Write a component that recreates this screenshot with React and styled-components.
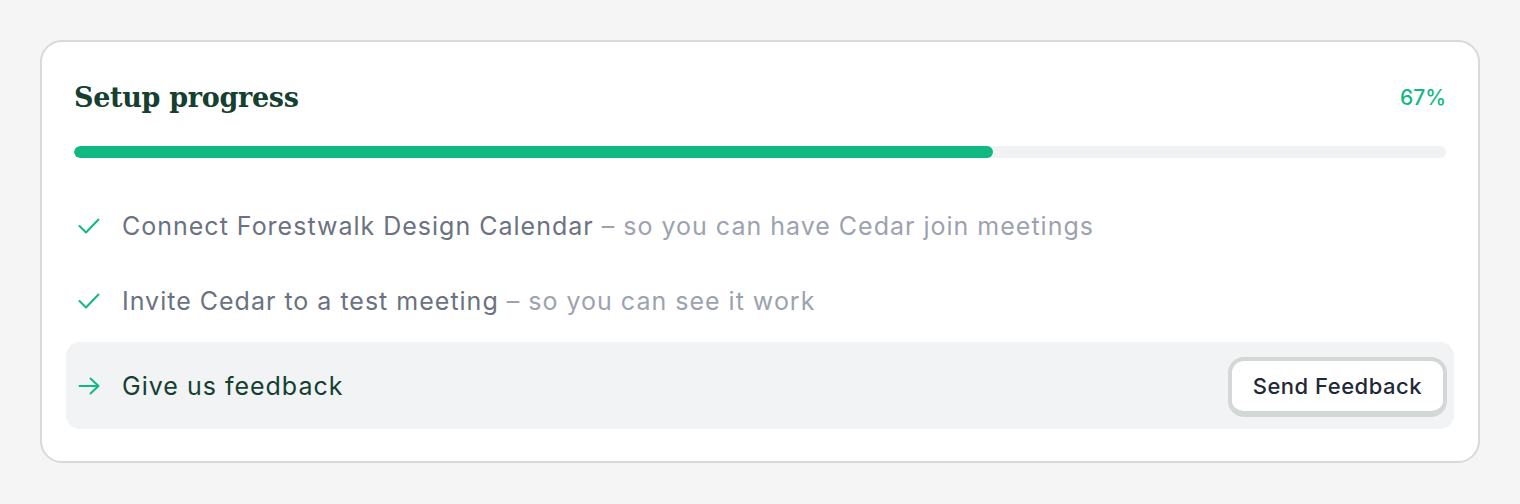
import React from "react";
import styled, { createGlobalStyle } from "styled-components";

const GlobalStyle = createGlobalStyle`
  html, body {
    margin: 0;
    padding: 0;
    background: #f5f5f5;
  }
  body {
    font-family: Inter, "Noto Sans", sans-serif;
    -webkit-font-smoothing: antialiased;
  }
`;

const Page = styled.div`
  padding: 40px;
`;

const Card = styled.section`
  background: #fff;
  border: 2px solid #d6dad8;
  border-radius: 22px;
  padding: 33px 32px 32px;
`;

const Header = styled.div`
  display: flex;
  align-items: center;
  justify-content: space-between;
  height: 44px;
`;

const Title = styled.h2`
  margin: 0;
  font-family: "DejaVu Serif", "Liberation Serif", serif;
  font-size: 27px;
  font-weight: 600;
  color: #15402f;
  letter-spacing: -0.3px;
`;

const Percent = styled.span`
  font-size: 21px;
  font-weight: 500;
  color: #10b981;
`;

const Track = styled.div`
  margin-top: 27px;
  height: 12px;
  border-radius: 6px;
  background: #f1f2f4;
  overflow: hidden;
`;

const Fill = styled.div`
  height: 100%;
  border-radius: 6px;
  background: #10b981;
`;

const List = styled.ul`
  list-style: none;
  margin: 34px -8px 0;
  padding: 0;
  display: flex;
  flex-direction: column;
  gap: 7px;
`;

const Row = styled.li`
  display: flex;
  align-items: center;
  gap: 22px;
  min-height: ${(p) => (p.$highlight ? "87px" : "68px")};
  padding: 0 7px 0 12px;
  box-sizing: border-box;
  border-radius: 14px;
  background: ${(p) => (p.$highlight ? "#f2f3f5" : "transparent")};
`;

const Label = styled.span`
  flex: 1;
  font-size: 25px;
  font-weight: 400;
  letter-spacing: 1px;
  color: ${(p) => (p.$active ? "#15402f" : "#6b7280")};
`;

const Hint = styled.span`
  color: #9ca3af;
`;

const Button = styled.button`
  height: 60px;
  padding: 0 21px;
  font-family: inherit;
  font-size: 22px;
  font-weight: 500;
  letter-spacing: 0.5px;
  color: #1f2937;
  background: #fff;
  border: 4px solid #d3d8d6;
  border-bottom-width: 6px;
  border-radius: 16px;
  cursor: pointer;
  margin-top: 3px;
`;

const Check = () => (
  <svg width="22" height="16" viewBox="0 0 22 16" fill="none">
    <polyline
      points="1.5,8 8,14.5 20.5,1.5"
      stroke="#10b981"
      strokeWidth="2"
      strokeLinecap="round"
      strokeLinejoin="round"
    />
  </svg>
);

const Arrow = () => (
  <svg width="22" height="18" viewBox="0 0 22 18" fill="none">
    <path
      d="M1.5 9H20.5M12.5 1.5L20.5 9L12.5 16.5"
      stroke="#10b981"
      strokeWidth="2"
      strokeLinecap="round"
      strokeLinejoin="round"
    />
  </svg>
);

const steps = [
  {
    label: "Connect Forestwalk Design Calendar",
    hint: "so you can have Cedar join meetings",
  },
  { label: "Invite Cedar to a test meeting", hint: "so you can see it work" },
];

const progress = 67;

export default function App() {
  return (
    <Page>
      <GlobalStyle />
      <Card>
        <Header>
          <Title>Setup progress</Title>
          <Percent>{progress}%</Percent>
        </Header>
        <Track>
          <Fill style={{ width: `${progress}%` }} />
        </Track>
        <List>
          {steps.map((s) => (
            <Row key={s.label}>
              <Check />
              <Label>
                {s.label} <Hint>– {s.hint}</Hint>
              </Label>
            </Row>
          ))}
          <Row $highlight>
            <Arrow />
            <Label $active>Give us feedback</Label>
            <Button>Send Feedback</Button>
          </Row>
        </List>
      </Card>
    </Page>
  );
}
